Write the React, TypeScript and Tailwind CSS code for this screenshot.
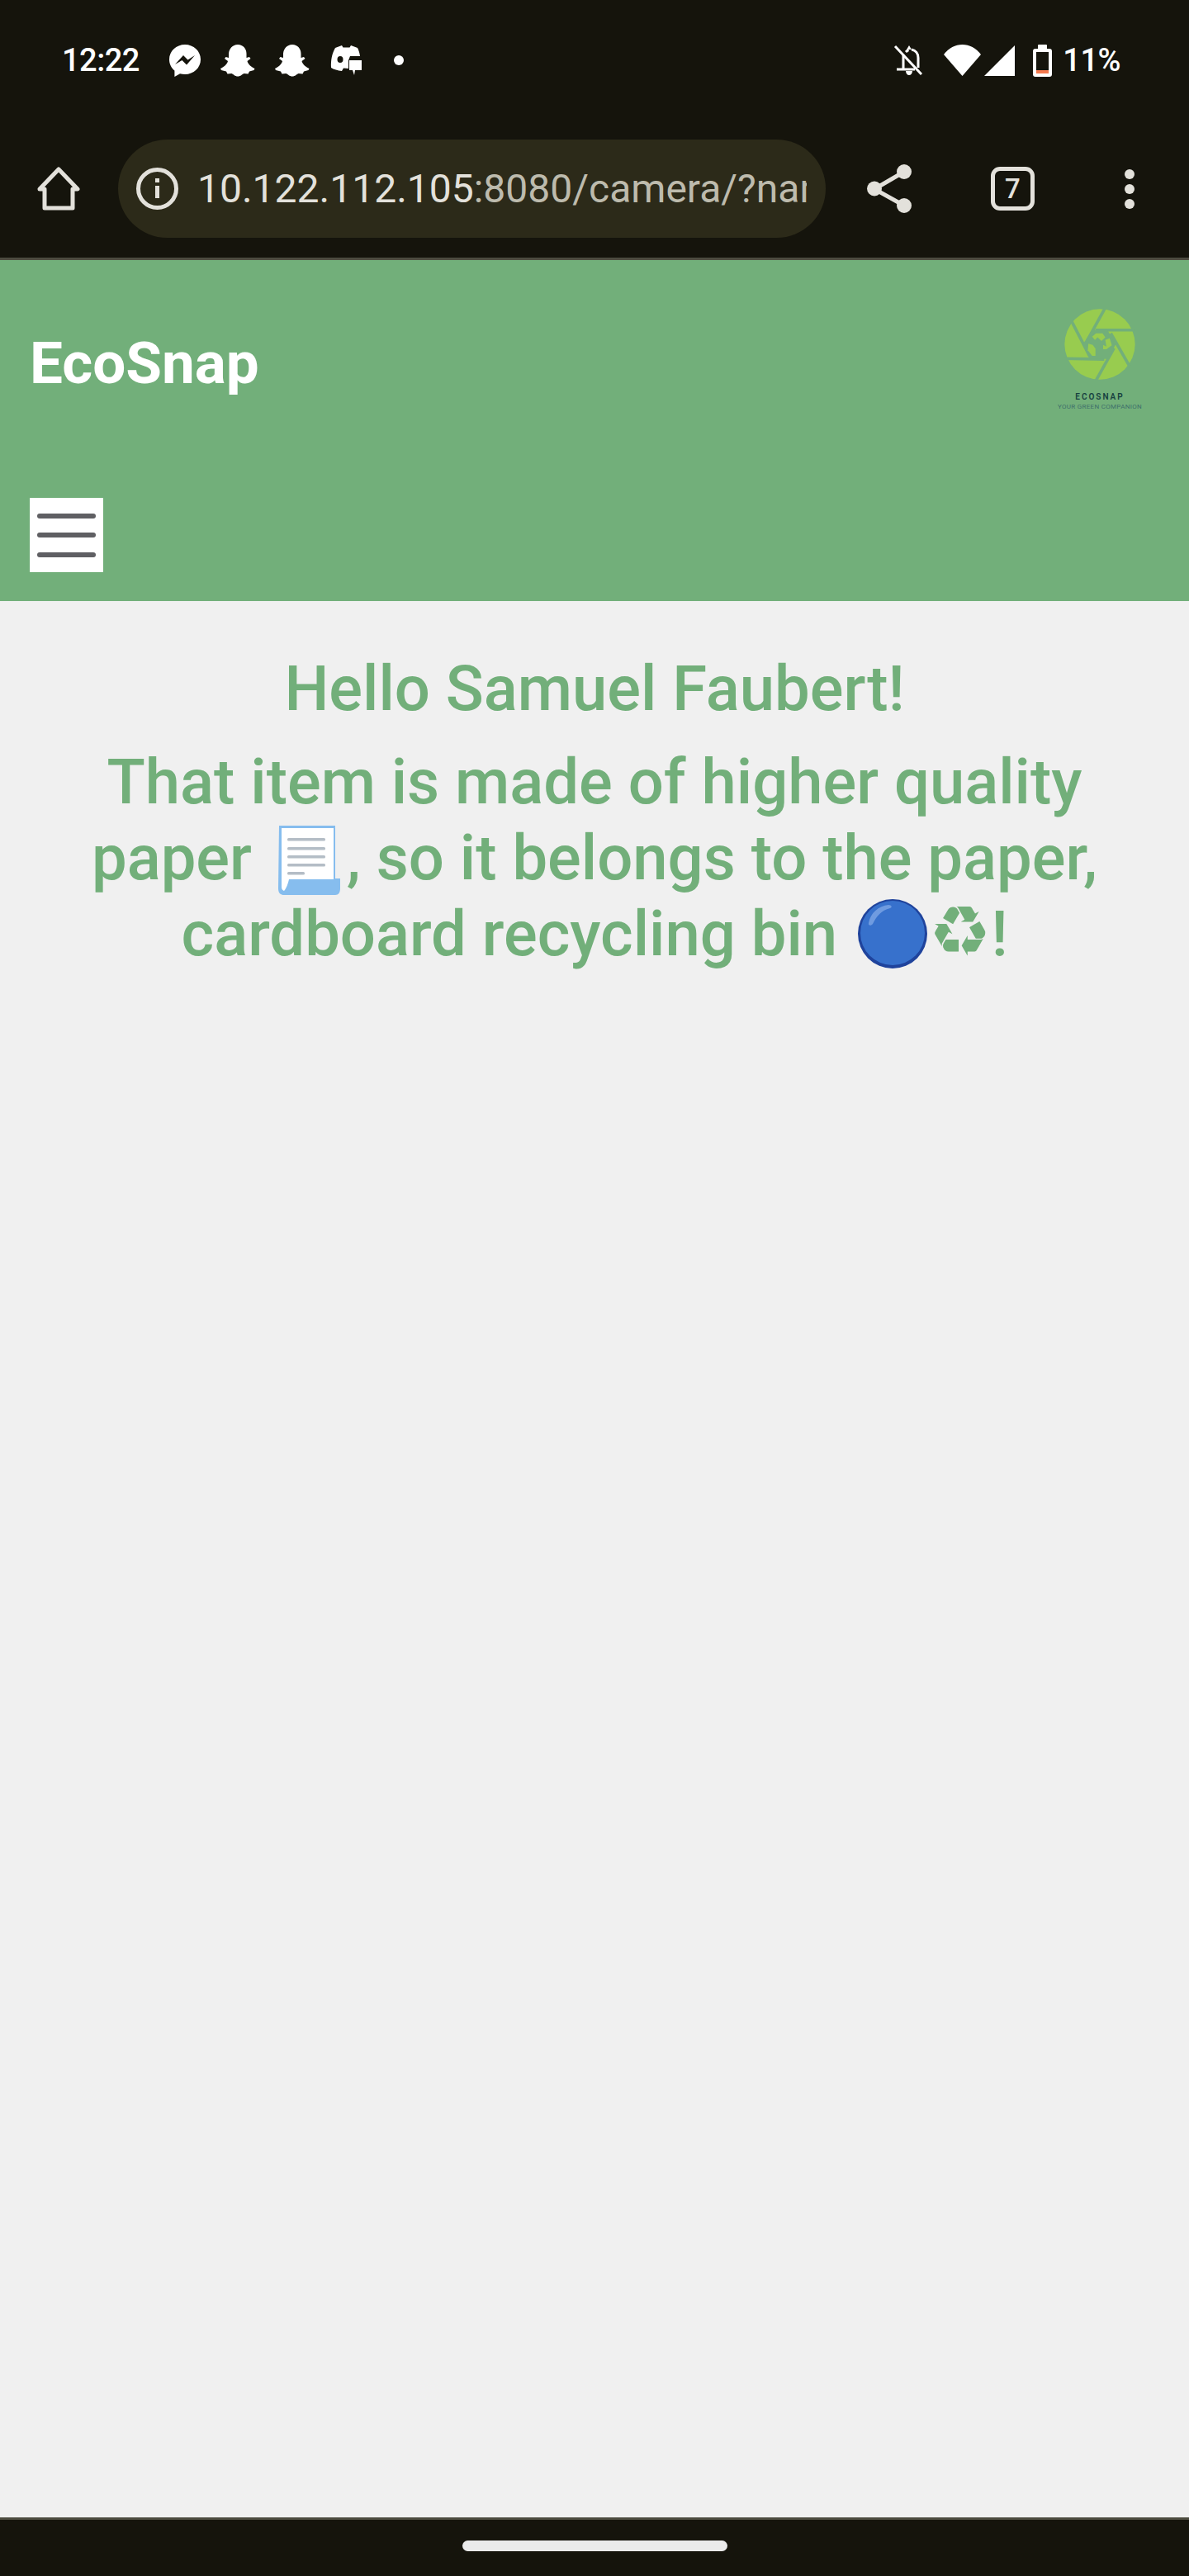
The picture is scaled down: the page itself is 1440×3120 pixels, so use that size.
import React from 'react';

const icon = '#E3E1DB';

function Messenger() {
  return (
    <svg width="38" height="39" viewBox="0 0 38 39">
      <path fill="#fff" d="M19 0C8.5 0 0 7.8 0 18c0 5.5 2.4 10.2 6.4 13.4V39l6.6-3.8c1.9.5 3.9.8 6 .8 10.500 0 19-7.800 19-18S29.500 0 19 0z" />
      <path fill="#15140C" d="M7 24l10-11 5.500 5.500L31 13 21 24.500 15.500 19z" />
    </svg>
  );
}

function Snapchat() {
  return (
    <svg width="42" height="39" viewBox="0 0 42 39">
      <path fill="#fff" d="M21 0c6.500 0 10.500 5 10.500 11v5l3.500-1 1.500 2-4 3c1 4 4.500 7 9 9l-1 2-5.500 1.500-1.500 3-5-.5c-2.500 1-4 3.500-7.500 3.500s-5-2.500-7.500-3.500l-5 .5-1.500-3L1 31l-1-2c4.500-2 8-5 9-9l-4-3 1.500-2 3.500 1v-5C10.500 5 14.500 0 21 0z" />
    </svg>
  );
}

function DiscordNotification() {
  return (
    <svg width="40" height="36" viewBox="0 0 40 36">
      <path fill="#fff" d="M7 3l8-3 1.500 2.500h8L26 0l8 3c1.500 3 2.500 6 3 10H25l-2 5v10l-6-.5-2 3.500c-5-.5-10-2-13-4-.5-9 1-17 5-24z" />
      <ellipse cx="13" cy="17" rx="3.500" ry="4" fill="#15140C" />
      <path fill="#fff" d="M24 18h15v12h-8l-1 6-2-6h-4z" />
    </svg>
  );
}

function BellOff() {
  return (
    <svg width="36" height="38" viewBox="0 0 36 38" fill="none" stroke="#fff" strokeWidth="3">
      <path d="M2 2l32 34" />
      <path d="M12 12v17M4 30h22M15 9c1-1 2-2 3.500-2.500M22 6c5 1 8 5 8 10v12" />
      <path fill="#fff" stroke="none" d="M19 1l3 5h-6zM15 32h8c0 3-2 5-4 5s-4-2-4-5z" />
    </svg>
  );
}

function PaperEmoji() {
  return (
    <svg className="inline-block align-[-19px] ml-[12px] mr-[8px]" width="76" height="84" viewBox="0 0 76 84">
      <path fill="#86BDEE" d="M2 0h68v64h6v12c0 5-2 8-6 8H8c-4 0-7-2-7-8z" />
      <path fill="#fff" d="M5 3h63v62H14c-1 4-3 11-6 14-2-1-3-2-3-5z" />
      <g fill="#B4BDC6">
        <rect x="12" y="15" width="46" height="3.500" rx="1.500" />
        <rect x="12" y="26" width="46" height="3.500" rx="1.500" />
        <rect x="12" y="36" width="46" height="3.500" rx="1.500" />
        <rect x="12" y="46" width="46" height="3.500" rx="1.500" />
        <rect x="12" y="56" width="21" height="3.500" rx="1.500" />
      </g>
    </svg>
  );
}

function BlueCircleEmoji() {
  return (
    <svg className="inline-block align-[-16px] ml-[6px]" width="84" height="84" viewBox="0 0 84 84">
      <circle cx="42" cy="42" r="42" fill="#1F439C" />
      <circle cx="42" cy="41" r="39" fill="#3771CC" />
      <path fill="#6F9BE0" d="M13 29c2-12 12-21 24-22 4 0 5 3 2 4-11 3-16 9-21 19-2 3-6 2-5-1z" />
    </svg>
  );
}

function Logo() {
  return (
    <div className="flex flex-col items-center w-[106px]">
      <svg width="86" height="88" viewBox="148 68 260 264">
        <circle cx="278" cy="200" r="129" fill="#98CC4F" />
        <g stroke="#72AF7A" strokeWidth="11">
          <path d="M298 66L232 186" />
          <path d="M176 118L240 242" />
          <path d="M148 252L294 255" />
          <path d="M262 336L330 214" />
          <path d="M390 286L318 160" />
          <path d="M402 148L262 148" />
        </g>
        <path fill="#72AF7A" d="M250 148h56l30 52-28 54h-68l-24-54z" />
        <g fill="#98CC4F">
          <path d="M250 172l14-12h24l10 14-14 14-14-14-10 10z" />
          <path d="M298 184l16-6 8 26-20 14h-12v-16l12 6z" />
          <path d="M236 198l16 4 10 14v26h-12l-16-20z" />
        </g>
      </svg>
      <span className="mt-[15px] text-[10px] leading-[10px] font-semibold tracking-[2px] text-[#173F40]">ECOSNAP</span>
      <span className="mt-[3px] text-[8px] leading-[8px] tracking-[0.300px] text-[#3F6F6A] whitespace-nowrap">YOUR GREEN COMPANION</span>
    </div>
  );
}

export default function App() {
  return (
    <div className="flex flex-col w-[1440px] h-[3120px] bg-[#F0F0F0] font-['Roboto',sans-serif] overflow-hidden">
      {/* phone status bar */}
      <div className="flex items-center justify-between h-[147px] pl-[75px] pr-[83px] pb-[1px] bg-[#15140C] text-white">
        <div className="flex items-center">
          <span className="text-[38px] font-medium w-[130px] tracking-[-0.500px]">12:22</span>
          <div className="flex items-center gap-[24px]">
            <Messenger />
            <Snapchat />
            <Snapchat />
            <DiscordNotification />
          </div>
          <div className="w-[12px] h-[12px] rounded-full bg-white ml-[38px]" />
        </div>
        <div className="flex items-center">
          <BellOff />
          <svg className="ml-[25px]" width="45" height="38" viewBox="0 0 45 38">
            <path fill="#fff" d="M0 12C6 4 14 0 22.500 0S39 4 45 12L22.500 38z" />
          </svg>
          <svg className="ml-[4px]" width="37" height="37" viewBox="0 0 37 37">
            <path fill="#fff" d="M37 0v37H0z" />
          </svg>
          <div className="relative ml-[22px] w-[23px] h-[39px]">
            <div className="mx-auto w-[11px] h-[5px] bg-white rounded-t-[1px]" />
            <div className="w-[23px] h-[34px] border-[4px] border-white rounded-[3px]" />
            <div className="absolute left-[4px] right-[4px] bottom-[4px] h-[4px] bg-[#F47A50]" />
          </div>
          <span className="ml-[13px] text-[38px] font-medium tracking-[-0.500px]">11%</span>
        </div>
      </div>

      {/* browser toolbar */}
      <div className="flex items-center h-[168px] pb-[2px] bg-[#15140C] border-b-[3px] border-[#4C4B3F]">
        <svg className="ml-[45px]" width="52" height="53" viewBox="0 0 52 53" fill="none" stroke={icon} strokeWidth="5" strokeLinejoin="round">
          <path d="M3 27L26 3l23 24h-6v23H9V27z" />
        </svg>
        <div className="flex items-center ml-[46px] w-[857px] h-[119px] rounded-full bg-[#2C2A19] pl-[22px] pr-[23px]">
          <svg className="shrink-0" width="51" height="51" viewBox="0 0 51 51" fill="none">
            <circle cx="25.500" cy="25.500" r="23" stroke={icon} strokeWidth="5" />
            <rect x="23" y="22" width="5" height="15" fill={icon} />
            <rect x="23" y="13" width="5" height="5" fill={icon} />
          </svg>
          <div className="ml-[23px] overflow-hidden whitespace-nowrap text-[48px] leading-[60px] text-[#BDBBAD]">
            <span className="text-[#E3E1DB]">10.122.112.105</span>:8080/camera/?name=Samuel
          </div>
        </div>
        <svg className="ml-[50px]" width="54" height="59" viewBox="0 0 54 59" fill={icon}>
          <path d="M45 9L9 30l36 20" fill="none" stroke={icon} strokeWidth="5" />
          <ellipse cx="45" cy="9" rx="9" ry="9" />
          <ellipse cx="9" cy="29.500" rx="9" ry="9" />
          <ellipse cx="45" cy="50" rx="9" ry="9" />
        </svg>
        <div className="flex items-center justify-center ml-[96px] w-[53px] h-[53px] border-[5px] border-[#E3E1DB] rounded-[11px] text-[33px] font-medium text-[#E3E1DB] leading-none">
          7
        </div>
        <div className="flex flex-col gap-[6px] ml-[109px]">
          <div className="w-[12px] h-[12px] rounded-full bg-[#E3E1DB]" />
          <div className="w-[12px] h-[12px] rounded-full bg-[#E3E1DB]" />
          <div className="w-[12px] h-[12px] rounded-full bg-[#E3E1DB]" />
        </div>
      </div>

      {/* site header */}
      <header className="h-[413px] bg-[#72AF7A] pl-[36px] pr-[55px] pt-[58px]">
        <div className="flex justify-between items-start h-[230px]">
          <h1 className="mt-[21px] text-[71px] leading-[92px] font-bold text-white">EcoSnap</h1>
          <Logo />
        </div>
        <button className="flex flex-col justify-center gap-[17.500px] w-[89px] h-[90px] bg-white px-[9px]">
          <span className="block h-[6px] rounded-full bg-[#5F5F63]" />
          <span className="block h-[6px] rounded-full bg-[#5F5F63]" />
          <span className="block h-[6px] rounded-full bg-[#5F5F63]" />
        </button>
      </header>

      {/* message */}
      <main className="flex-1 flex flex-col items-center pt-[61px] px-[60px] text-center text-[#72AF7A] font-medium">
        <h2 className="text-[76px] leading-[90px]">Hello Samuel Faubert!</h2>
        <p className="mt-[22px] text-[76px] leading-[92px] w-[1300px]">
          That item is made of higher quality paper <PaperEmoji />, so it belongs to the paper, cardboard recycling bin <BlueCircleEmoji /><span className="ml-[2px] font-['DejaVu_Sans',sans-serif] text-[84px] leading-[80px]">♻</span>!
        </p>
      </main>

      {/* gesture bar */}
      <div className="flex items-center justify-center h-[71px] pb-[6px] bg-[#15140C] border-t-[3px] border-[#4C4B3F]">
        <div className="w-[321px] h-[13px] rounded-full bg-[#EBEBEB]" />
      </div>
    </div>
  );
}
